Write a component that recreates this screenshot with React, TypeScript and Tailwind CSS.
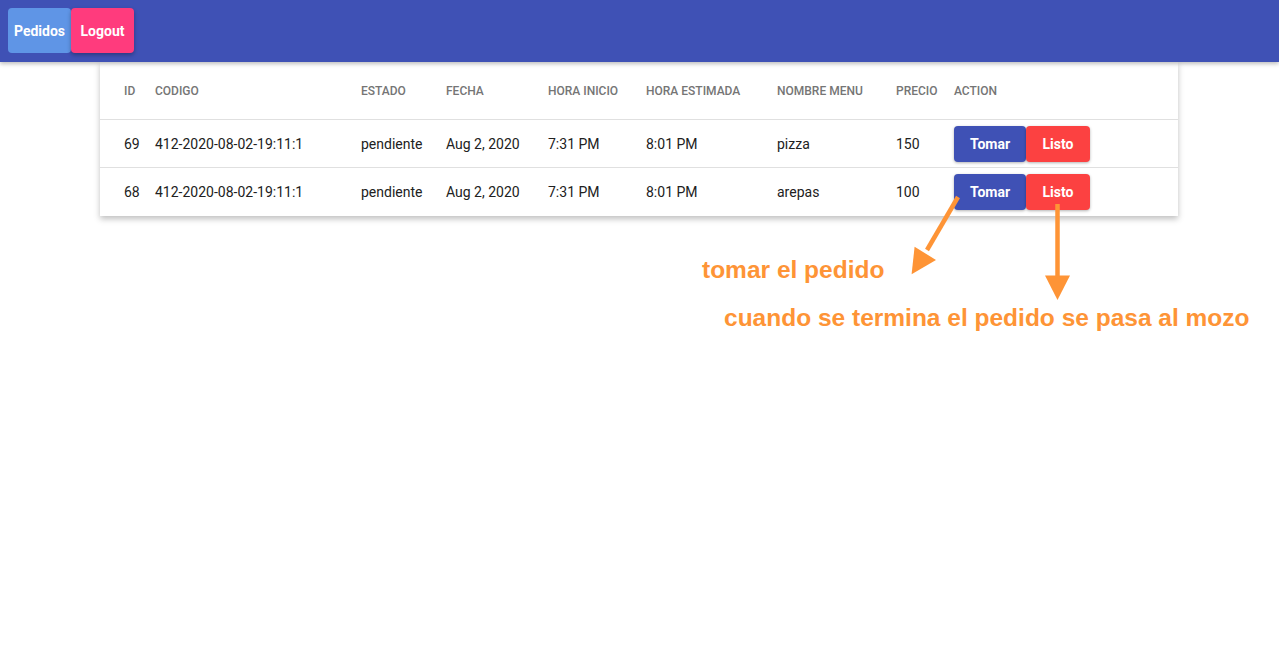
import React from 'react';

interface Pedido {
  id: number;
  codigo: string;
  estado: string;
  fecha: string;
  horaInicio: string;
  horaEstimada: string;
  menu: string;
  precio: number;
}

const pedidos: Pedido[] = [
  { id: 69, codigo: '412-2020-08-02-19:11:1', estado: 'pendiente', fecha: 'Aug 2, 2020', horaInicio: '7:31 PM', horaEstimada: '8:01 PM', menu: 'pizza', precio: 150 },
  { id: 68, codigo: '412-2020-08-02-19:11:1', estado: 'pendiente', fecha: 'Aug 2, 2020', horaInicio: '7:31 PM', horaEstimada: '8:01 PM', menu: 'arepas', precio: 100 },
];

const columns = ['ID', 'CODIGO', 'ESTADO', 'FECHA', 'HORA INICIO', 'HORA ESTIMADA', 'NOMBRE MENU', 'PRECIO', 'ACTION'];

// column widths taken from the header positions
const gridCols = 'grid grid-cols-[31px_206px_85px_102px_98px_131px_119px_58px_1fr] items-center pl-6';

function cn2(...c: string[]) {
  return c.filter(Boolean).join(' ');
}

function Header() {
  return (
    <header className="h-[62px] bg-[#3f51b5] shadow-[0_2px_4px_rgba(0,0,0,0.25)] flex items-start pt-2 pl-2 relative z-10">
      <button className="h-[45px] w-[63px] rounded bg-[#5f95e6] text-white text-sm font-bold">
        Pedidos
      </button>
      <button className="h-[45px] w-[63px] rounded bg-[#ff3b7d] text-white text-sm font-bold shadow-[0_2px_4px_rgba(0,0,0,0.3)]">
        Logout
      </button>
    </header>
  );
}

function PedidosTable() {
  return (
    <div className="w-[1078px] ml-[100px] bg-white shadow-[0_3px_6px_rgba(0,0,0,0.25)]">
      <div className={`${gridCols} h-[58px] border-b border-[#e0e0e0] text-xs font-medium text-[#757575]`}>
        {columns.map((c) => (
          <div key={c}>{c}</div>
        ))}
      </div>
      {pedidos.map((p, i) => (
        <div
          key={p.id}
          className={cn2(gridCols, 'h-[48px] text-sm text-[#212121]', i === 0 ? 'border-b border-[#e0e0e0]' : '')}
        >
          <div>{p.id}</div>
          <div>{p.codigo}</div>
          <div>{p.estado}</div>
          <div>{p.fecha}</div>
          <div>{p.horaInicio}</div>
          <div>{p.horaEstimada}</div>
          <div>{p.menu}</div>
          <div>{p.precio}</div>
          <div className="flex">
            <button className="h-9 w-[72px] rounded bg-[#3f51b5] text-white font-bold text-sm shadow-[0_1px_3px_rgba(0,0,0,0.3)]">
              Tomar
            </button>
            <button className="h-9 w-[64px] rounded bg-[#fc4141] text-white font-bold text-sm shadow-[0_1px_3px_rgba(0,0,0,0.3)]">
              Listo
            </button>
          </div>
        </div>
      ))}
    </div>
  );
}

function Annotations() {
  return (
    <>
      <svg className="absolute left-0 top-0 pointer-events-none" width="1279" height="665">
        <line x1="958" y1="197" x2="927" y2="250" stroke="#fe9436" strokeWidth="4.5" />
        <polygon points="914.6,246.7 936,260 911.6,274.3" fill="#fe9436" />
        <line x1="1057.5" y1="204" x2="1057.5" y2="278" stroke="#fe9436" strokeWidth="4.5" />
        <polygon points="1045,275.5 1070,275.5 1057.5,300" fill="#fe9436" />
      </svg>
      <div className="absolute left-[702px] top-[256px] text-[24.5px] leading-[28px] font-bold text-[#fe9436] font-['Liberation_Sans',Arial,sans-serif]">
        tomar el pedido
      </div>
      <div className="absolute left-[724px] top-[304px] text-[24.5px] leading-[28px] font-bold text-[#fe9436] font-['Liberation_Sans',Arial,sans-serif]">
        cuando se termina el pedido se pasa al mozo
      </div>
    </>
  );
}

export default function App() {
  return (
    <div className="relative w-[1279px] h-[665px] bg-white overflow-hidden font-['Roboto',sans-serif]">
      <Header />
      <PedidosTable />
      <Annotations />
    </div>
  );
}
